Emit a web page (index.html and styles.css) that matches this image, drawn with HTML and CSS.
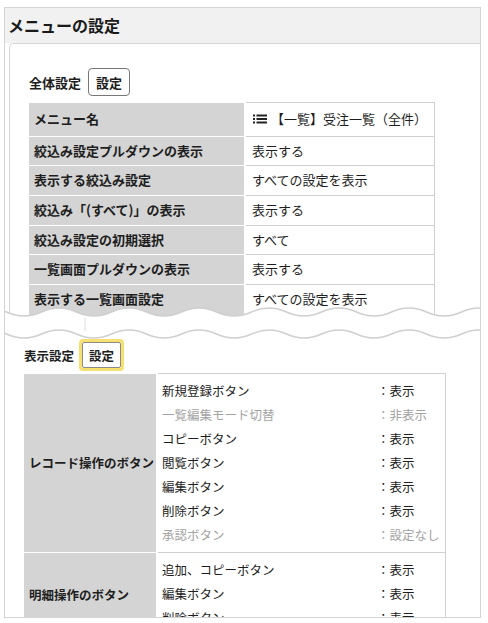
FILE: index.html
```html
<!DOCTYPE html>
<html lang="ja">
<head>
<meta charset="utf-8">
<title>メニューの設定</title>
<link rel="stylesheet" href="styles.css">
</head>
<body>
<div class="frame">
  <section class="piece piece-top">
    <h1 class="card-title">メニューの設定</h1>
    <div class="card-body">
      <div class="sec-head">
        <span class="sec-label">全体設定</span>
        <button class="btn" type="button">設定</button>
      </div>
      <table class="kv">
        <colgroup><col class="kv-k"><col class="kv-v"></colgroup>
        <tr class="first">
          <th>メニュー名</th>
          <td><span class="menu-name"><svg class="list-icon" viewBox="0 0 14 10" width="14" height="10"><rect x="0" y="0.5" width="2" height="2" fill="#222"/><rect x="0" y="4" width="2" height="2" fill="#222"/><rect x="0" y="7.5" width="2" height="2" fill="#222"/><rect x="3.5" y="0.5" width="10.5" height="2" fill="#222"/><rect x="3.5" y="4" width="10.5" height="2" fill="#222"/><rect x="3.5" y="7.5" width="10.5" height="2" fill="#222"/></svg>【一覧】受注一覧（全件）</span></td>
        </tr>
        <tr><th>絞込み設定プルダウンの表示</th><td>表示する</td></tr>
        <tr><th>表示する絞込み設定</th><td>すべての設定を表示</td></tr>
        <tr><th>絞込み「(すべて)」の表示</th><td>表示する</td></tr>
        <tr><th>絞込み設定の初期選択</th><td>すべて</td></tr>
        <tr><th>一覧画面プルダウンの表示</th><td>表示する</td></tr>
        <tr class="last"><th>表示する一覧画面設定</th><td>すべての設定を表示</td></tr>
      </table>
    </div>
    <svg class="tear tear-bottom" viewBox="0 0 477 14" width="477" height="14" preserveAspectRatio="none">
      <path d="M-32.5,8 q17.5,-8 35,0 t35,0 t35,0 t35,0 t35,0 t35,0 t35,0 t35,0 t35,0 t35,0 t35,0 t35,0 t35,0 t35,0 t35,0 t35,0 L540,20 L-40,20 Z" fill="#fff"/>
      <path d="M-32.5,8 q17.5,-8 35,0 t35,0 t35,0 t35,0 t35,0 t35,0 t35,0 t35,0 t35,0 t35,0 t35,0 t35,0 t35,0 t35,0 t35,0 t35,0" fill="none" stroke="#cfcfcf" stroke-width="1.5"/>
    </svg>
  </section>

  <section class="piece piece-bottom">
    <svg class="tear tear-top" viewBox="0 0 477 22" width="477" height="22" preserveAspectRatio="none">
      <path d="M-32.5,16 q17.5,-8 35,0 t35,0 t35,0 t35,0 t35,0 t35,0 t35,0 t35,0 t35,0 t35,0 t35,0 t35,0 t35,0 t35,0 t35,0 t35,0 L540,-2 L-40,-2 Z" fill="#fff"/>
      <line x1="81" y1="0" x2="81" y2="13" stroke="#dcdcdc" stroke-width="1"/>
      <path d="M-32.5,16 q17.5,-8 35,0 t35,0 t35,0 t35,0 t35,0 t35,0 t35,0 t35,0 t35,0 t35,0 t35,0 t35,0 t35,0 t35,0 t35,0 t35,0" fill="none" stroke="#cfcfcf" stroke-width="1.5"/>
    </svg>
    <div class="sec-head sec-head-sm">
      <span class="sec-label">表示設定</span>
      <span class="btn-ring"><button class="btn btn-sm" type="button">設定</button></span>
    </div>
    <table class="groups">
      <colgroup><col class="g-k"><col class="g-v"></colgroup>
      <tr>
        <th>レコード操作のボタン</th>
        <td>
          <ul class="items">
            <li><span>新規登録ボタン</span><span>：表示</span></li>
            <li class="muted"><span>一覧編集モード切替</span><span>：非表示</span></li>
            <li><span>コピーボタン</span><span>：表示</span></li>
            <li><span>閲覧ボタン</span><span>：表示</span></li>
            <li><span>編集ボタン</span><span>：表示</span></li>
            <li><span>削除ボタン</span><span>：表示</span></li>
            <li class="muted"><span>承認ボタン</span><span>：設定なし</span></li>
          </ul>
        </td>
      </tr>
      <tr>
        <th>明細操作のボタン</th>
        <td>
          <ul class="items">
            <li><span>追加、コピーボタン</span><span>：表示</span></li>
            <li><span>編集ボタン</span><span>：表示</span></li>
            <li><span>削除ボタン</span><span>：表示</span></li>
          </ul>
        </td>
      </tr>
    </table>
  </section>
</div>
</body>
</html>
```

FILE: styles.css
```css
html, body {
  margin: 0;
  padding: 0;
  background: #fff;
}
body {
  padding-top: 7px;
  font-family: "Noto Sans CJK JP", "Noto Sans", sans-serif;
  color: #1e1e1e;
  overflow: hidden;
}
.frame {
  margin-left: 4px;
  width: 477px;
}
.piece {
  position: relative;
  box-sizing: border-box;
  overflow: hidden;
  border-left: 1px solid #d4d4d4;
  border-right: 1px solid #d4d4d4;
}
.piece-top {
  height: 311px;
  border-top: 1px solid #d4d4d4;
}
.piece-bottom {
  height: 300px;
  border-bottom: 1px solid #d4d4d4;
  padding: 21px 0 0 19px;
}
.tear {
  position: absolute;
  left: -1px;
  display: block;
}
.tear-bottom { bottom: 0; }
.tear-top { top: 0; }

.card-title {
  margin: 0;
  height: 35px;
  line-height: 35px;
  padding-left: 3px;
  font-size: 16px;
  font-weight: bold;
  background: #f1f1f1;
  color: #1a1a1a;
}
.card-body {
  margin-left: 4px;
  border-top: 1px solid #d6d6d6;
  border-left: 1px solid #d6d6d6;
  border-top-left-radius: 5px;
  padding: 24px 0 0 19px;
}

.sec-head {
  display: flex;
  align-items: center;
  gap: 7px;
  height: 28px;
}
.sec-label {
  font-size: 13px;
  font-weight: 600;
}
.btn {
  box-sizing: border-box;
  width: 42px;
  height: 28px;
  padding: 0;
  border: 1px solid #777;
  border-radius: 4px;
  background: #fff;
  font-family: inherit;
  font-size: 13px;
  font-weight: 600;
  color: #1e1e1e;
}
.sec-head-sm {
  height: 32px;
  gap: 5px;
}
.sec-head-sm .sec-label {
  font-size: 12.5px;
}
.btn-ring {
  display: inline-flex;
  border: 3px solid #f5e070;
  border-radius: 4px;
}
.btn-sm {
  width: 39px;
  height: 26px;
  border-color: #8a8a8a;
  border-radius: 2px;
  font-size: 12.5px;
}

.kv {
  margin-top: 6px;
  width: 405px;
  border-collapse: collapse;
  table-layout: fixed;
  font-size: 13px;
  line-height: 16.6px;
}
.kv-k { width: 216px; }
.kv-v { width: 189px; }
.kv th {
  background: #d4d4d4;
  text-align: left;
  font-weight: bold;
  padding: 6px 5px;
  border-bottom: 1px solid #fff;
  white-space: nowrap;
}
.kv td {
  padding: 6px 6px;
  border: 1px solid #d0d0d0;
  border-left: 2px solid #fff;
  white-space: nowrap;
}
.kv tr.first th,
.kv tr.first td {
  padding-top: 8px;
  padding-bottom: 8px;
}
.kv tr.last th,
.kv tr.last td {
  padding-bottom: 14px;
}
.menu-name {
  display: inline-flex;
  align-items: center;
  gap: 2px;
}
.list-icon {
  display: block;
  margin-left: 1px;
  margin-right: 2px;
}

.groups {
  margin-top: 2px;
  width: 421px;
  border-collapse: collapse;
  table-layout: fixed;
  font-size: 12.5px;
}
.g-k { width: 133px; }
.g-v { width: 288px; }
.groups th {
  background: #d4d4d4;
  text-align: left;
  font-weight: bold;
  padding: 0 4px 0 5px;
  border-bottom: 1px solid #fff;
  white-space: nowrap;
  vertical-align: middle;
}
.groups td {
  padding: 5px 4px;
  border: 1px solid #d0d0d0;
  border-left: 2px solid #fff;
}
.items {
  list-style: none;
  margin: 0;
  padding: 0;
}
.items li {
  display: grid;
  grid-template-columns: 215px auto;
  line-height: 24px;
  white-space: nowrap;
}
.items li.muted {
  color: #a3a3a3;
}
```
